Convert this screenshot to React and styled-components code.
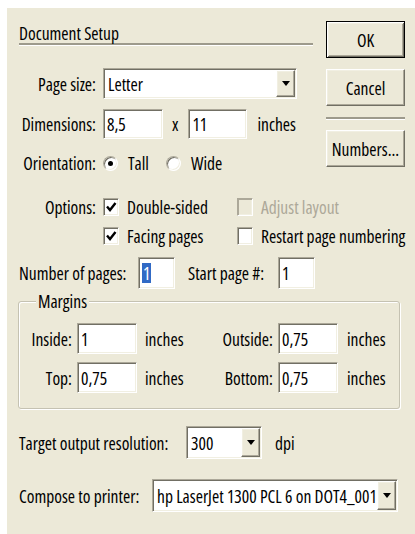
import React from "react";
import styled, { createGlobalStyle, css } from "styled-components";

const face = "#ece9d8";
const shadow = "#aca899";
const darkShadow = "#716f64";
const light = "#f1efe2";
const white = "#ffffff";

const GlobalStyle = createGlobalStyle`
  html, body { margin: 0; padding: 0; background: #ffffff; }
`;

const sunken = css`
  border: 1px solid;
  border-color: ${shadow} ${white} ${white} ${shadow};
  box-shadow: inset 1px 1px 0 ${darkShadow}, inset -1px -1px 0 ${light};
`;

const raised = css`
  border: 1px solid;
  border-color: ${white} ${darkShadow} ${darkShadow} ${white};
  box-shadow: inset -1px -1px 0 ${shadow}, inset 1px 1px 0 ${light};
`;

const Page = styled.div`
  padding: 8px 0 0 7px;
  background: #fff;
`;

const Dialog = styled.div`
  box-sizing: border-box;
  width: 408px;
  height: 526px;
  background: ${face};
  padding: 13px 10px 0 12px;
  font-family: "Open Sans", "Liberation Sans", Arial, sans-serif;
  font-stretch: 75%;
  font-size: 17.5px;
  line-height: 20px;
  color: #000;
  display: flex;
  flex-direction: column;
`;

const Top = styled.div`
  display: grid;
  grid-template-columns: 294px 79px;
  column-gap: 13px;
`;

const Main = styled.div`
  display: flex;
  flex-direction: column;
`;

const Header = styled.div`
  margin-top: 2px;
  border-bottom: 2px solid #9d9a8c;
  box-shadow: 0 1px 0 ${white};
`;

const Row = styled.div`
  display: flex;
  align-items: center;
  height: ${(p) => p.$h || 31}px;
  margin-top: ${(p) => p.$mt || 0}px;
`;

const Label = styled.span`
  box-sizing: border-box;
  flex-shrink: 0;
  width: ${(p) => p.$w || 84}px;
  margin-left: ${(p) => p.$ml || 0}px;
  padding-right: ${(p) => (p.$left ? 0 : 7)}px;
  text-align: ${(p) => (p.$left ? "left" : "right")};
  white-space: nowrap;
`;

const TextBox = styled.div`
  box-sizing: border-box;
  flex-shrink: 0;
  width: ${(p) => p.$w}px;
  height: ${(p) => p.$h || 31}px;
  background: #fff;
  ${sunken};
  display: flex;
  align-items: center;
  padding-left: 3px;
  white-space: nowrap;
`;

const SelectBox = styled(TextBox)`
  padding: 1px;
  padding-left: 4px;
`;

const SelectValue = styled.span`
  flex: 1;
  min-width: 0;
  line-height: 26px;
  overflow: hidden;
  white-space: nowrap;
`;

const DropButton = styled.span`
  box-sizing: border-box;
  flex-shrink: 0;
  align-self: stretch;
  width: 19px;
  background: ${face};
  ${raised};
  display: flex;
  align-items: center;
  justify-content: center;
`;

const Arrow = styled.span`
  width: 0;
  height: 0;
  border-left: 4px solid transparent;
  border-right: 4px solid transparent;
  border-top: 5px solid #000;
`;

const Unit = styled.span`
  margin-left: ${(p) => p.$ml || 0}px;
  margin-right: ${(p) => p.$mr || 0}px;
  white-space: nowrap;
`;

const Highlight = styled.span`
  background: #316ac5;
  color: #fff;
  padding: 0 1px;
`;

const RadioItem = styled.span`
  display: flex;
  align-items: center;
  margin-left: ${(p) => p.$ml || 0}px;
`;

const RadioDot = styled.span`
  box-sizing: border-box;
  width: 15px;
  height: 15px;
  border-radius: 50%;
  background: #fff;
  border: 1px solid;
  border-color: ${shadow} ${white} ${white} ${shadow};
  box-shadow: inset 1px 1px 0 ${darkShadow}, inset -1px -1px 0 ${light};
  display: flex;
  align-items: center;
  justify-content: center;
  margin-right: 10px;
  &::after {
    content: "";
    width: 5px;
    height: 5px;
    border-radius: 50%;
    background: ${(p) => (p.$on ? "#000" : "transparent")};
  }
`;

const CheckGrid = styled.div`
  display: grid;
  grid-template-columns: 84px 134px 1fr;
  grid-auto-rows: 29px;
  margin-top: 15px;
  align-items: center;
`;

const CheckItem = styled.span`
  display: flex;
  align-items: center;
  grid-column: ${(p) => p.$col};
  color: ${(p) => (p.$disabled ? shadow : "#000")};
  white-space: nowrap;
`;

const CheckBox = styled.span`
  box-sizing: border-box;
  flex-shrink: 0;
  width: 16px;
  height: 18px;
  margin-right: 8px;
  background: ${(p) => (p.$disabled ? face : "#fff")};
  border: 1px solid;
  border-color: ${shadow} ${white} ${white} ${shadow};
  box-shadow: ${(p) =>
    p.$disabled
      ? `inset 1px 1px 0 ${shadow}, inset -1px -1px 0 ${light}`
      : `inset 1px 1px 0 ${darkShadow}, inset -1px -1px 0 ${light}`};
  display: flex;
  align-items: center;
  justify-content: center;
`;

const ButtonColumn = styled.div`
  display: flex;
  flex-direction: column;
`;

const PushButton = styled.button`
  box-sizing: border-box;
  width: 79px;
  height: 37px;
  margin: ${(p) => p.$mt || 0}px 0 0 0;
  padding: 0;
  font: inherit;
  color: #000;
  background: ${face};
  ${(p) =>
    p.$default
      ? css`
          border: 1px solid #000;
          box-shadow: inset 1px 1px 0 ${white}, inset -1px -1px 0 ${darkShadow},
            inset 2px 2px 0 ${light}, inset -2px -2px 0 ${shadow};
        `
      : raised};
`;

const Separator = styled.div`
  margin-top: 11px;
  height: 0;
  border-top: 2px solid #9d9a8c;
  border-bottom: 1px solid ${white};
`;

const Group = styled.fieldset`
  box-sizing: border-box;
  width: 382px;
  height: 118px;
  margin: 2px 0 0 -1px;
  padding: 12px 0 0 11px;
  border: 1px solid #c5c2b2;
  border-radius: 3px;
  box-shadow: inset 1px 1px 0 ${white}, 1px 1px 0 ${white};
  min-width: 0;
`;

const Legend = styled.legend`
  margin-left: 6px;
  padding: 0 2px;
  background: ${face};
  line-height: 20px;
`;

const MarginGrid = styled.div`
  display: grid;
  grid-template-columns: 47px 60px 85px 56px 60px auto;
  grid-auto-rows: 31px;
  row-gap: 8px;
  align-items: center;
`;

const GridLabel = styled.span`
  text-align: right;
  padding-right: 5px;
  white-space: nowrap;
`;

const GridUnit = styled.span`
  padding-left: ${(p) => p.$pl || 8}px;
`;

function Select({ width, height, children }) {
  return (
    <SelectBox $w={width} $h={height}>
      <SelectValue>{children}</SelectValue>
      <DropButton>
        <Arrow />
      </DropButton>
    </SelectBox>
  );
}

function Check({ col, checked, disabled, children }) {
  return (
    <CheckItem $col={col} $disabled={disabled}>
      <CheckBox $disabled={disabled}>
        {checked && (
          <svg width="12" height="12" viewBox="0 0 12 12">
            <path d="M2 5.5 L5 9 L10.5 2" fill="none" stroke="#000" strokeWidth="2.4" />
          </svg>
        )}
      </CheckBox>
      {children}
    </CheckItem>
  );
}

export default function App() {
  return (
    <>
      <GlobalStyle />
      <Page>
        <Dialog>
          <Top>
            <Main>
              <Header>Document Setup</Header>
              <Row $mt={23} $h={31}>
                <Label>Page size:</Label>
                <Select width={194}>Letter</Select>
              </Row>
              <Row $mt={10} $h={30}>
                <Label>Dimensions:</Label>
                <TextBox $w={60} $h={30}>8,5</TextBox>
                <Unit $ml={9} $mr={10}>x</Unit>
                <TextBox $w={59} $h={30}>11</TextBox>
                <Unit $ml={10}>inches</Unit>
              </Row>
              <Row $mt={10} $h={28}>
                <Label>Orientation:</Label>
                <RadioItem>
                  <RadioDot $on />
                  Tall
                </RadioItem>
                <RadioItem $ml={17}>
                  <RadioDot />
                  Wide
                </RadioItem>
              </Row>
            </Main>
            <ButtonColumn>
              <PushButton $default>OK</PushButton>
              <PushButton $mt={11}>Cancel</PushButton>
              <Separator />
              <PushButton $mt={10}>Numbers...</PushButton>
            </ButtonColumn>
          </Top>

          <CheckGrid>
            <Label>Options:</Label>
            <Check col={2} checked>
              Double-sided
            </Check>
            <Check col={3} disabled>
              Adjust layout
            </Check>
            <Check col={2} checked>
              Facing pages
            </Check>
            <Check col={3}>Restart page numbering</Check>
          </CheckGrid>

          <Row $mt={7} $h={32}>
            <Label $left $w={119}>
              Number of pages:
            </Label>
            <TextBox $w={37} $h={32}>
              <Highlight>1</Highlight>
            </TextBox>
            <Label $left $w={90} $ml={13}>
              Start page #:
            </Label>
            <TextBox $w={37} $h={32}>1</TextBox>
          </Row>

          <Group>
            <Legend>Margins</Legend>
            <MarginGrid>
              <GridLabel>Inside:</GridLabel>
              <TextBox $w={60}>1</TextBox>
              <GridUnit>inches</GridUnit>
              <GridLabel>Outside:</GridLabel>
              <TextBox $w={60}>0,75</TextBox>
              <GridUnit $pl={9}>inches</GridUnit>
              <GridLabel>Top:</GridLabel>
              <TextBox $w={60}>0,75</TextBox>
              <GridUnit>inches</GridUnit>
              <GridLabel>Bottom:</GridLabel>
              <TextBox $w={60}>0,75</TextBox>
              <GridUnit $pl={9}>inches</GridUnit>
            </MarginGrid>
          </Group>

          <Row $mt={17} $h={33}>
            <Label $left $w={167}>
              Target output resolution:
            </Label>
            <Select width={76} height={33}>
              300
            </Select>
            <Unit $ml={13}>dpi</Unit>
          </Row>

          <Row $mt={20} $h={33}>
            <Label $left $w={133}>
              Compose to printer:
            </Label>
            <Select width={246} height={33}>
              hp LaserJet 1300 PCL 6 on DOT4_001
            </Select>
          </Row>
        </Dialog>
      </Page>
    </>
  );
}
